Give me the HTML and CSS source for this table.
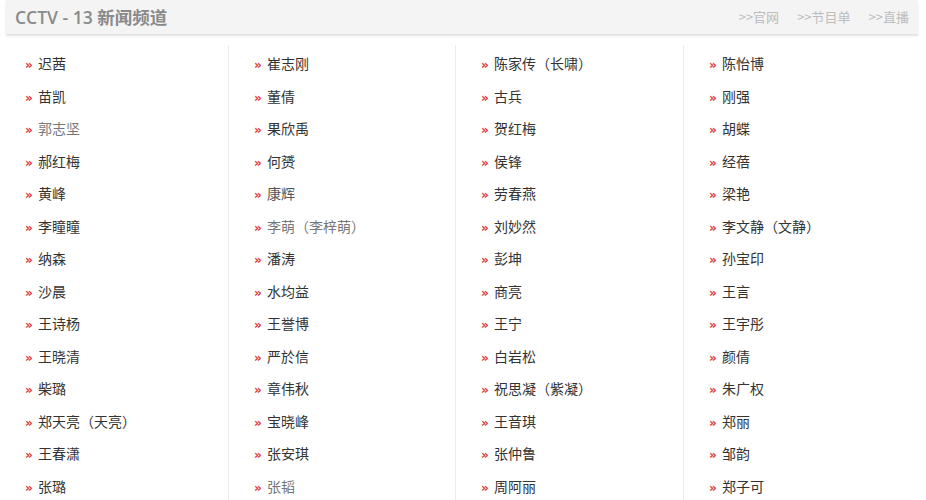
FILE: index.html
```html
<!DOCTYPE html>
<html lang="zh">
<head>
<meta charset="utf-8">
<title>CCTV-13 新闻频道</title>
<link rel="stylesheet" href="styles.css">
</head>
<body>
<div class="header">
  <div class="title">CCTV - 13 新闻频道</div>
  <div class="links">
    <a class="link">&gt;&gt;官网</a>
    <a class="link">&gt;&gt;节目单</a>
    <a class="link">&gt;&gt;直播</a>
  </div>
</div>
<div class="grid">
  <ul class="col">
    <li><span class="b">»</span>迟茜</li>
    <li><span class="b">»</span>苗凯</li>
    <li class="v"><span class="b">»</span>郭志坚</li>
    <li><span class="b">»</span>郝红梅</li>
    <li><span class="b">»</span>黄峰</li>
    <li><span class="b">»</span>李瞳瞳</li>
    <li><span class="b">»</span>纳森</li>
    <li><span class="b">»</span>沙晨</li>
    <li><span class="b">»</span>王诗杨</li>
    <li><span class="b">»</span>王晓清</li>
    <li><span class="b">»</span>柴璐</li>
    <li><span class="b">»</span>郑天亮（天亮）</li>
    <li><span class="b">»</span>王春潇</li>
    <li><span class="b">»</span>张璐</li>
  </ul>
  <ul class="col">
    <li><span class="b">»</span>崔志刚</li>
    <li><span class="b">»</span>董倩</li>
    <li><span class="b">»</span>果欣禹</li>
    <li><span class="b">»</span>何赟</li>
    <li class="v2"><span class="b">»</span>康辉</li>
    <li class="v"><span class="b">»</span>李萌（李梓萌）</li>
    <li><span class="b">»</span>潘涛</li>
    <li><span class="b">»</span>水均益</li>
    <li><span class="b">»</span>王誉博</li>
    <li><span class="b">»</span>严於信</li>
    <li><span class="b">»</span>章伟秋</li>
    <li><span class="b">»</span>宝晓峰</li>
    <li><span class="b">»</span>张安琪</li>
    <li class="v"><span class="b">»</span>张韬</li>
  </ul>
  <ul class="col">
    <li><span class="b">»</span>陈家传（长啸）</li>
    <li><span class="b">»</span>古兵</li>
    <li><span class="b">»</span>贺红梅</li>
    <li><span class="b">»</span>侯锋</li>
    <li><span class="b">»</span>劳春燕</li>
    <li><span class="b">»</span>刘妙然</li>
    <li><span class="b">»</span>彭坤</li>
    <li><span class="b">»</span>商亮</li>
    <li><span class="b">»</span>王宁</li>
    <li><span class="b">»</span>白岩松</li>
    <li><span class="b">»</span>祝思凝（紫凝）</li>
    <li><span class="b">»</span>王音琪</li>
    <li><span class="b">»</span>张仲鲁</li>
    <li><span class="b">»</span>周阿丽</li>
  </ul>
  <ul class="col">
    <li><span class="b">»</span>陈怡博</li>
    <li><span class="b">»</span>刚强</li>
    <li><span class="b">»</span>胡蝶</li>
    <li><span class="b">»</span>经蓓</li>
    <li><span class="b">»</span>梁艳</li>
    <li><span class="b">»</span>李文静（文静）</li>
    <li><span class="b">»</span>孙宝印</li>
    <li><span class="b">»</span>王言</li>
    <li><span class="b">»</span>王宇彤</li>
    <li><span class="b">»</span>颜倩</li>
    <li><span class="b">»</span>朱广权</li>
    <li><span class="b">»</span>郑丽</li>
    <li><span class="b">»</span>邹韵</li>
    <li><span class="b">»</span>郑子可</li>
  </ul>
</div>
</body>
</html>
```

FILE: styles.css
```css
html, body {
  margin: 0;
  padding: 0;
  background: #fff;
  font-family: "Noto Sans CJK SC", "Noto Sans", sans-serif;
  overflow: hidden;
}
.header {
  margin: 0 8px 0 6px;
  height: 34px;
  background: #f4f4f4;
  box-shadow: 0 2px 2px #e2e2e2;
  display: flex;
  align-items: center;
  justify-content: space-between;
  padding: 0 8px 0 9px;
}
.title {
  font-family: "Open Sans", "Noto Sans CJK SC", sans-serif;
  font-size: 17.5px;
  font-weight: 600;
  color: #8a8a8a;
  line-height: 22px;
}
.links {
  display: flex;
  gap: 18px;
  margin-right: 1px;
}
.link {
  font-size: 13px;
  color: #bdbdbd;
  line-height: 18px;
}
.grid {
  display: grid;
  grid-template-columns: 228px 227px 228px 227px;
  margin-top: 11px;
}
.col {
  list-style: none;
  margin: 0;
  padding: 2px 0 0 25px;
  border-left: 1px solid #ececec;
}
.col:first-child {
  border-left: none;
}
.col li {
  height: 32.5px;
  line-height: 32.5px;
  font-size: 14px;
  color: #333;
  white-space: nowrap;
}
.col li.v {
  color: #777;
}
.col li.v2 {
  color: #555;
}
.b {
  color: #e03a3a;
  font-size: 12px;
  font-weight: bold;
  font-family: "DejaVu Sans", sans-serif;
  display: inline-block;
  width: 13px;
}
```
